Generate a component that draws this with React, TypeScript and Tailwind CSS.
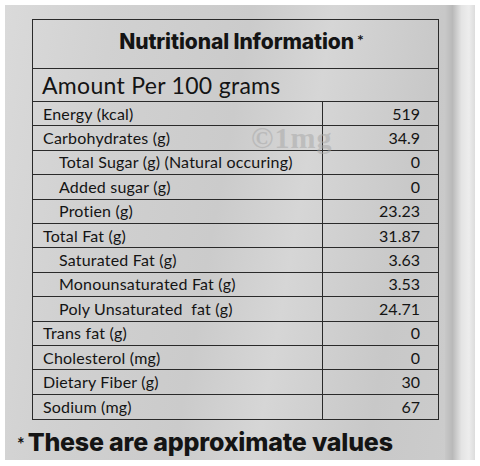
import React from "react";

type Row = {
  label: string;
  value: string;
  indent?: boolean;
};

const rows: Row[] = [
  { label: "Energy (kcal)", value: "519" },
  { label: "Carbohydrates (g)", value: "34.9" },
  { label: "Total Sugar (g) (Natural occuring)", value: "0", indent: true },
  { label: "Added sugar (g)", value: "0", indent: true },
  { label: "Protien (g)", value: "23.23", indent: true },
  { label: "Total Fat (g)", value: "31.87" },
  { label: "Saturated Fat (g)", value: "3.63", indent: true },
  { label: "Monounsaturated Fat (g)", value: "3.53", indent: true },
  { label: "Poly Unsaturated\u00a0 fat (g)", value: "24.71", indent: true },
  { label: "Trans fat (g)", value: "0" },
  { label: "Cholesterol (mg)", value: "0" },
  { label: "Dietary Fiber (g)", value: "30" },
  { label: "Sodium (mg)", value: "67" },
];

const NutritionRow = ({ row, last }: { row: Row; last: boolean }) => {
  return (
    <div className={`flex h-[24.4px] ${last ? "" : "border-b-[1.5px] border-[#2a2a2a]"}`}>
      <div
        className={`w-[290px] flex items-center border-r-[1.5px] border-[#2a2a2a] text-[16px] tracking-[0.2px] ${
          row.indent ? "pl-[26px]" : "pl-[10px]"
        }`}
      >
        {row.label}
      </div>
      <div className="flex-1 flex items-center justify-end pr-[18px] text-[16px]">{row.value}</div>
    </div>
  );
};

export default function App() {
  return (
    <div className="w-[480px] h-[466px] bg-white pt-[5px] pl-[5px] font-['Lato',sans-serif] text-[#141414]">
      <div className="relative w-[470px] h-[455px] flex bg-[linear-gradient(100deg,#dadada_0%,#d1d1d1_20%,#cbcbcb_45%,#d6d6d6_60%,#c8c8c8_80%,#cdcdcd_100%)]">
        <div className="flex flex-col pl-[27px] pt-[14px] w-[440px]">
          <div className="w-[407px] border-[1.5px] border-[#2a2a2a] relative">
            <div className="h-[49px] flex items-center justify-center border-b-[1.5px] border-[#2a2a2a] pb-[5px] pl-[12px]">
              <span className="text-[21px] font-extrabold font-['Inter',sans-serif] tracking-[-0.1px]">Nutritional Information</span>
              <span className="text-[16px] font-bold self-start mt-[8px] ml-[3px]">*</span>
            </div>
            <div className="h-[33px] flex items-center pl-[9px] border-b-[1.5px] border-[#2a2a2a] text-[23px] tracking-[0.3px]">
              Amount Per 100 grams
            </div>
            {rows.map((row, i) => (
              <NutritionRow key={i} row={row} last={i === rows.length - 1} />
            ))}
            <div className="absolute left-[218px] top-[100px] text-[30px] leading-[36px] font-bold text-[#a6a6a6] opacity-50 font-['Liberation_Serif',serif] tracking-[1px]">
              ©1mg
            </div>
          </div>
          <div className="flex items-start mt-[10px] -ml-[15px]">
            <span className="text-[18px] font-bold mt-[1px] mr-[3px]">*</span>
            <span className="text-[25px] font-extrabold font-['Inter',sans-serif] tracking-[-0.2px] leading-none">
              These are approximate values
            </span>
          </div>
        </div>
        <div className="flex-1 bg-[linear-gradient(90deg,#c8c8c8_0%,#b9b9b9_25%,#e4e4e4_55%,#ededed_80%,#dcdcdc_100%)]"></div>
      </div>
    </div>
  );
}
